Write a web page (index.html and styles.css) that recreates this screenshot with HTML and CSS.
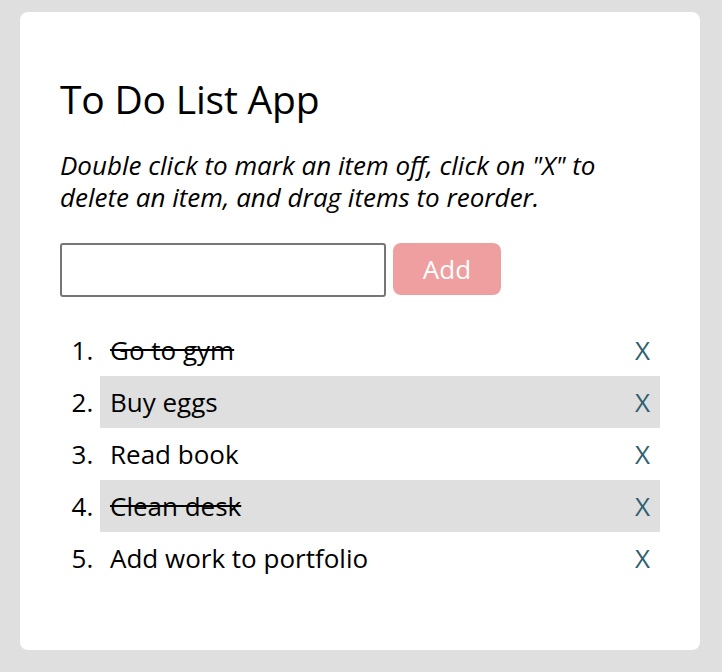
FILE: index.html
```html
<!DOCTYPE html>
<html>
<head>
<meta charset="utf-8">
<link rel="stylesheet" href="styles.css">
</head>
<body>
<div class="card">
  <h1 class="title">To Do List App</h1>
  <p class="hint">Double click to mark an item off, click on "X" to delete an item, and drag items to reorder.</p>
  <form class="add-form">
    <input class="add-input" type="text">
    <button class="add-btn" type="button">Add</button>
  </form>
  <ol class="list">
    <li class="item"><span class="item-text done">Go to gym</span><span class="del">X</span></li>
    <li class="item alt"><span class="item-text">Buy eggs</span><span class="del">X</span></li>
    <li class="item"><span class="item-text">Read book</span><span class="del">X</span></li>
    <li class="item alt"><span class="item-text done">Clean desk</span><span class="del">X</span></li>
    <li class="item"><span class="item-text">Add work to portfolio</span><span class="del">X</span></li>
  </ol>
</div>
</body>
</html>
```
FILE: styles.css
```css
html, body {
  margin: 0;
  padding: 0;
  background: #dfdfdf;
  font-family: "Open Sans", sans-serif;
  color: #000;
}
body {
  padding: 12px 22px 22px 20px;
}
.card {
  background: #fff;
  border-radius: 8px;
  width: 680px;
  height: 638px;
  box-sizing: border-box;
  padding: 40px 40px;
}
.title {
  margin: 21px 0 0 0;
  font-size: 39px;
  font-weight: 400;
  line-height: 52px;
  letter-spacing: -0.2px;
}
.hint {
  margin: 24px 0 0 0;
  font-size: 26px;
  font-style: italic;
  line-height: 32px;
}
.add-form {
  display: flex;
  align-items: flex-start;
  gap: 7px;
  margin-top: 30px;
}
.add-input {
  width: 326px;
  height: 54px;
  box-sizing: border-box;
  border: 2px solid #767676;
  border-radius: 3px;
  margin: 0;
  font-size: 24px;
  font-family: "Open Sans", sans-serif;
}
.add-btn {
  width: 108px;
  height: 52px;
  border: none;
  border-radius: 8px;
  background: #ef9f9f;
  color: #fff;
  font-family: "Open Sans", sans-serif;
  font-size: 26px;
  margin: 0;
  padding: 0;
}
.list {
  margin: 27px 0 0 0;
  padding-left: 40px;
  font-size: 26px;
}
.item {
  height: 52px;
  padding: 0 10px 0 10px;
  line-height: 52px;
}
.item::after {
  content: "";
  display: table;
  clear: both;
}
.item.alt {
  background: #dfdfdf;
}
.done {
  text-decoration: line-through;
}
.del {
  float: right;
  color: #2e5f6f;
}
```
